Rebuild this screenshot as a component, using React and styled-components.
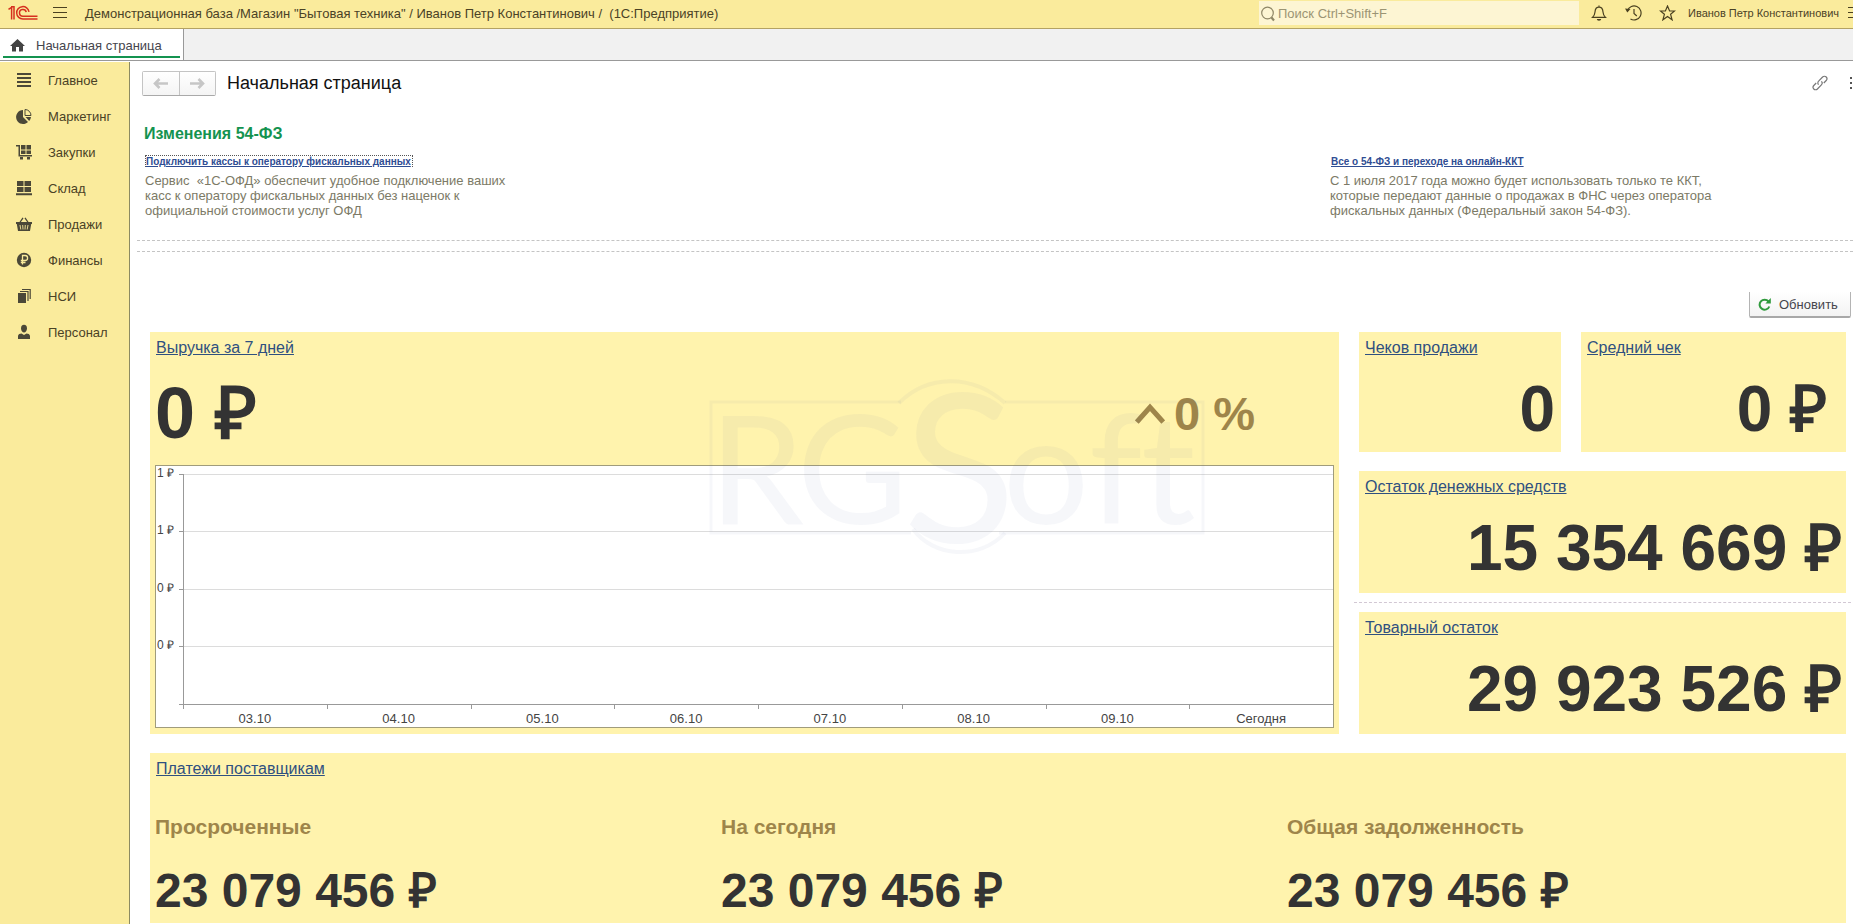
import React from "react";
import styled, { createGlobalStyle, css } from "styled-components";

const GlobalStyle = createGlobalStyle`
  *, *::before, *::after { box-sizing: border-box; }
  body {
    margin: 0;
    background: #fff;
    color: #4a4430;
    font-family: "Liberation Sans", Arial, sans-serif;
    font-size: 13px;
  }
  button, input { font: inherit; color: inherit; }
  h1, h2, h3, p, ul { margin: 0; padding: 0; }
`;

const Page = styled.div`
  display: flex;
  flex-direction: column;
  min-height: 100vh;
  overflow-x: hidden;
`;

/* ---------- top bar ---------- */

const TopBar = styled.header`
  display: flex;
  align-items: center;
  height: 29px;
  padding: 1px 0 3px 8px;
  background: #faeb9c;
  border-bottom: 1px solid #b3a263;
`;

const IconButton = styled.button`
  display: flex;
  align-items: center;
  justify-content: ${(p) => p.$align || "center"};
  flex: none;
  width: ${(p) => p.$width || 34}px;
  height: 24px;
  padding: 0;
  border: 0;
  background: none;
  color: ${(p) => p.$color || "#4a4120"};
  overflow: hidden;
  svg { flex: none; }
`;

const AppTitle = styled.div`
  flex: 1;
  min-width: 0;
  padding-left: 3px;
  white-space: pre;
  overflow: hidden;
  color: #4a4226;
`;

const Search = styled.label`
  display: flex;
  align-items: center;
  width: 320px;
  height: 24px;
  margin-right: 3px;
  padding-left: 2px;
  background: #fdf5d3;
  color: #8f8766;
`;

const SearchInput = styled.input`
  flex: 1;
  min-width: 0;
  padding: 0 0 0 2px;
  border: 0;
  outline: 0;
  background: none;
  &::placeholder { color: #9b9474; opacity: 1; }
`;

const UserName = styled.a`
  width: 164px;
  padding-left: 4px;
  color: #4a4226;
  font-size: 11px;
  text-decoration: none;
  white-space: nowrap;
`;

/* ---------- tabs ---------- */

const TabBar = styled.nav`
  display: flex;
  height: 32px;
  background: #f1f1f1;
  border-bottom: 1px solid #999;
`;

const Tab = styled.a`
  display: flex;
  align-items: flex-start;
  width: 184px;
  padding: 2px 3px;
  background: #fff;
  border-right: 1px solid #999;
  color: #45454d;
  text-decoration: none;
`;

const TabInner = styled.span`
  display: flex;
  align-items: center;
  flex: 1;
  gap: 11px;
  height: 27px;
  padding: 3px 0 0 7px;
  border-bottom: 2px solid #149350;
`;

/* ---------- side menu ---------- */

const Body = styled.div`
  display: flex;
  flex: 1;
`;

const SideMenu = styled.nav`
  flex: none;
  width: 130px;
  margin-top: 1px;
  background: #faeb9c;
  border-right: 1px solid #8c8a62;
`;

const MenuItem = styled.a`
  display: flex;
  align-items: center;
  gap: 16px;
  height: 36px;
  padding-left: 16px;
  color: #4a4226;
  text-decoration: none;
  svg { color: #4b4838; }
`;

/* ---------- content ---------- */

const Content = styled.main`
  flex: 1;
  min-width: 0;
  padding-left: 7px;
`;

const FormHeader = styled.div`
  display: flex;
  align-items: center;
  height: 44px;
  padding-left: 5px;
`;

const NavButtons = styled.div`
  display: flex;
  width: 74px;
  height: 25px;
  margin-right: 11px;
  border: 1px solid #c4c4c4;
  border-bottom-color: #a9a9a9;
  border-radius: 2px;
`;

const NavButton = styled.button`
  display: flex;
  align-items: center;
  justify-content: center;
  flex: 1;
  padding: 0;
  border: 0;
  background: linear-gradient(#fff, #f4f4f4);
  color: #c6c6c6;
  & + & { border-left: 1px solid #c4c4c4; }
`;

const FormTitle = styled.h1`
  flex: 1;
  color: #111;
  font-size: 18px;
  font-weight: 400;
`;

const News = styled.section`
  padding: 20px 0 0 7px;
  height: 135px;
`;

const NewsTitle = styled.h2`
  color: #149350;
  font-size: 16px;
  line-height: 18px;
`;

const NewsColumns = styled.div`
  display: grid;
  grid-template-columns: 1185fr 524fr;
  padding-top: 12px;
`;

const NewsItem = styled.article`
  padding-left: 1px;
`;

const NewsLink = styled.a`
  display: block;
  width: max-content;
  padding-right: 1px;
  border: 1px dotted ${(p) => (p.$focused ? "#555" : "transparent")};
  border-bottom: 0;
  color: #2f4d93;
  font-size: 10px;
  font-weight: 700;
  line-height: 11px;
`;

const NewsText = styled.p`
  padding-top: 6px;
  color: #7c7a66;
  line-height: 15px;
  white-space: pre-line;
`;

const Separator = styled.hr`
  height: 0;
  margin: 0 0 ${(p) => p.$after || 0}px;
  border: 0;
  border-top: 1px dashed #c4c4c4;
`;

const Toolbar = styled.div`
  display: flex;
  justify-content: flex-end;
  padding: 0 2px 14px 0;
`;

const RefreshButton = styled.button`
  display: flex;
  align-items: center;
  gap: 8px;
  width: 102px;
  height: 26px;
  padding: 0 0 0 8px;
  border: 1px solid #b4b4b4;
  border-top: 0;
  border-bottom: 2px solid #a8a8a8;
  border-radius: 0 0 2px 2px;
  background: linear-gradient(#fff, #f3f3f3);
  color: #45454d;
`;

/* ---------- dashboard ---------- */

const Dashboard = styled.div`
  display: grid;
  grid-template-columns: 1189fr 487fr;
  gap: 19px 20px;
  padding: 0 7px 1px 13px;
`;

const Card = styled.section`
  display: flex;
  flex-direction: column;
  position: relative;
  background: #fff3ad;
  ${(p) => p.$wide && css`grid-column: 1 / -1;`}
`;

const CardLink = styled.a`
  align-self: flex-start;
  padding: 7px 0 0 6px;
  color: #2f5080;
  font-size: 16px;
  line-height: 18px;
`;

const Amount = styled.div`
  color: #333;
  font-size: ${(p) => p.$size}px;
  font-weight: 700;
  line-height: ${(p) => p.$size}px;
  white-space: nowrap;
`;

const TileAmount = styled(Amount)`
  padding: 20px ${(p) => p.$right}px 0 0;
  text-align: right;
`;

const RevenueRow = styled.div`
  display: flex;
  justify-content: space-between;
  height: 108px;
  padding: 20px 84px 0 5px;
`;

const Trend = styled.div`
  display: flex;
  align-items: center;
  gap: 9px;
  height: 72px;
  color: #9e854a;
  font-size: 47px;
  font-weight: 700;
`;

const Tiles = styled.div`
  display: grid;
  grid-template-columns: 202fr 265fr;
  grid-template-rows: 120px 122px 122px;
  gap: 19px 20px;
`;

const WideTile = styled(Card)`
  grid-column: 1 / -1;
`;

const TileDivider = styled.hr`
  position: absolute;
  top: -10px;
  left: -5px;
  right: -5px;
  margin: 0;
  border: 0;
  border-top: 1px dashed #d2c8d4;
`;

const ChartBox = styled.div`
  display: grid;
  grid-template-columns: 27px 1fr;
  grid-template-rows: 8px 231px 22px;
  height: 263px;
  margin: 0 5px 6px;
  border: 1px solid #a09c7c;
  background: #fff;
  color: #444;
`;

const YAxis = styled.div`
  grid-area: 2 / 1;
  display: grid;
  grid-template-rows: 57px 58px 57px 58px 1px;
`;

const YLabel = styled.div`
  position: relative;
  height: 14px;
  margin-top: -8px;
  padding-left: 1px;
  font-size: 12px;
  line-height: 14px;
  &::after {
    content: "";
    position: absolute;
    right: 0;
    top: 8px;
    width: 4px;
    border-top: 1px solid #999;
  }
`;

const Plot = styled.div`
  grid-area: 2 / 2;
  display: grid;
  grid-template-rows: 57px 58px 57px 58px 1px;
  border-left: 1px solid #999;
`;

const GridLine = styled.div`
  border-top: 1px solid ${(p) => (p.$axis ? "#999" : "#dcdcdc")};
`;

const XAxis = styled.div`
  grid-area: 3 / 2;
  display: grid;
  grid-template-columns: repeat(8, 1fr);
`;

const XLabel = styled.div`
  padding-top: 6px;
  line-height: 15px;
  text-align: center;
  background: linear-gradient(#999, #999) 0 0 / 1px 4px no-repeat;
`;

const Watermark = styled.svg`
  position: absolute;
  left: 47%;
  top: 47px;
  overflow: visible;
  pointer-events: none;
`;

const Debts = styled.div`
  display: grid;
  grid-template-columns: repeat(3, 1fr);
  margin-right: -2px;
  padding: 37px 0 8px;
`;

const Debt = styled.div`
  padding-left: 5px;
`;

const DebtTitle = styled.h3`
  margin-bottom: 28px;
  color: #9e854a;
  font-size: 21px;
  line-height: 24px;
`;

/* ---------- icons ---------- */

const Logo = () => (
  <svg width="30" height="16" viewBox="0 0 30 16" fill="none" stroke="#d6301f" aria-label="1C">
    <path d="M0.500 4.300 3.600 2.300V14.500M3 1.800H6V14.500" strokeWidth="1.500" />
    <path d="M21 6.800A6.200 6.200 0 1 0 15 14H29.500" strokeWidth="1.500" />
    <path d="M18.200 7.200A3.400 3.400 0 1 0 15 11.300H29.500" strokeWidth="1.500" />
  </svg>
);

const Burger = () => (
  <svg width="14" height="12" viewBox="0 0 14 12" stroke="currentColor">
    <path d="M0 .5h14M0 5.500h14M0 10.500h14" />
  </svg>
);

const Magnifier = () => (
  <svg width="15" height="17" viewBox="0 0 15 17" fill="none" stroke="currentColor">
    <circle cx="6.500" cy="8" r="5.800" strokeWidth="1.200" />
    <path d="M10.500 12.500l2.500 3" strokeWidth="2.200" />
  </svg>
);

const Bell = () => (
  <svg width="16" height="16" viewBox="0 0 16 16" fill="none" stroke="currentColor" strokeWidth="1.200">
    <path d="M8 .5v1.600M1.500 12.400h13c-1.800-1.600-2.300-2.600-2.500-5.400C11.800 3.800 10.200 2.200 8 2.200S4.200 3.800 4 7c-.2 2.800-.7 3.800-2.500 5.400z" />
    <path d="M5.800 14h4.400a2.200 1.800 0 0 1-4.400 0z" fill="currentColor" stroke="none" />
  </svg>
);

const History = () => (
  <svg width="17" height="16" viewBox="0 0 17 16" fill="none" stroke="currentColor" strokeWidth="1.200">
    <path d="M2.500 5.500A7 7 0 1 1 5.500 14M9 4v4.500l2.800 2.500" />
    <path d="M0 3.500l5.500.5L2.300 7.500z" fill="currentColor" stroke="none" />
  </svg>
);

const Star = () => (
  <svg width="17" height="16" viewBox="0 0 17 16" fill="none" stroke="currentColor" strokeWidth="1.200">
    <path d="M8.500 1l2.100 5h5l-4 3.300 1.500 5.500-4.600-3.300-4.600 3.300 1.500-5.500-4-3.300h5z" />
  </svg>
);

const Home = () => (
  <svg width="15" height="13" viewBox="0 0 15 13" fill="#444">
    <path d="M7.500 0 15 7h-2v5.500H9V8H6v4.500H2V7H0z" />
  </svg>
);

const ArrowLeft = () => (
  <svg width="15" height="11" viewBox="0 0 15 11" fill="none" stroke="currentColor" strokeWidth="2.600">
    <path d="M15 5.500H2M6.500 1 2 5.500 6.500 10" />
  </svg>
);

const ArrowRight = () => (
  <svg width="15" height="11" viewBox="0 0 15 11" fill="none" stroke="currentColor" strokeWidth="2.600">
    <path d="M0 5.500h13M8.500 1 13 5.500 8.500 10" />
  </svg>
);

const Chain = () => (
  <svg width="16" height="16" viewBox="0 0 16 16" fill="none" stroke="currentColor" strokeWidth="1.200">
    <path d="M6.600 9.600c-1-1-1-2.400 0-3.400l4-4.200c1-1 2.700-1 3.600 0s1 2.500 0 3.500L11.800 8" />
    <path d="M9.400 6.400c1 1 1 2.400 0 3.400l-4 4.200c-1 1-2.700 1-3.600 0s-1-2.500 0-3.500L4.200 8" />
  </svg>
);

const Dots = () => (
  <svg width="3" height="12" viewBox="0 0 3 12" fill="currentColor">
    <path d="M0 0h2v2H0zM0 5h2v2H0zM0 10h2v2H0z" />
  </svg>
);

const Refresh = () => (
  <svg width="13" height="13" viewBox="0 0 13 13" fill="none" stroke="#2f9a3c" strokeWidth="2">
    <path d="M10.500 3.500A5 5 0 1 0 11.300 8.500" />
    <path d="M12.800 0v5.400H7.400z" fill="#2f9a3c" stroke="none" />
  </svg>
);

const Caret = () => (
  <svg width="30" height="21" viewBox="0 0 30 21" fill="none" stroke="currentColor" strokeWidth="5">
    <path d="M1.800 19 15 4.300 28.200 19" />
  </svg>
);

const menuDrawings = {
  main: <path d="M1 1h14v2H1zM1 5h14v2H1zM1 9h14v2H1zM1 13h14v2H1z" />,
  marketing: (
    <>
      <path d="M7 2v7l5 5A7 7 0 1 1 7 2z" />
      <path d="M9 1.500a6 6 0 0 1 6 6H9z" fill="none" stroke="currentColor" />
      <path d="M9.500 9H15a7 7 0 0 1-1.800 4z" />
    </>
  ),
  purchases: (
    <path d="M0 1h4v10h12v1.500H2.500v-10H0zM5 1h4.500v4.500H5zM10.500 1H15v4.500h-4.500zM5 6.500h4.500V10H5zM10.500 6.500H15V10h-4.500zM4 13h3v2.500H4zM11 13h3v2.500h-3z" />
  ),
  stock: <path d="M1 1h6.500v5H1zM8.500 1H15v5H8.500zM1 7h6.500v5H1zM8.500 7H15v5H8.500zM0 13.300h16v2H0z" />,
  sales: (
    <>
      <path d="M0 6h16v2h-.8L14 15H2L.8 8H0z" />
      <path d="M3.500 7 7 1.800M12.500 7 9 1.800" stroke="currentColor" strokeWidth="1.300" />
      <path d="M4 9l.8 4.500M6.700 9l.3 4.500M9.300 9l-.3 4.500M12 9l-.8 4.500" stroke="#faeb9c" strokeWidth=".9" />
    </>
  ),
  finance: (
    <>
      <circle cx="8" cy="8" r="7.200" />
      <path d="M6.500 12.500v-9h2.600a2.200 2.200 0 0 1 0 5H4.800M4.800 10.500h4.700" fill="none" stroke="#faeb9c" strokeWidth="1.300" />
    </>
  ),
  reference: (
    <>
      <path d="M2 5h8v10H2z" />
      <path d="M4 3.500h8V13M6 1.500h8.200V11" fill="none" stroke="currentColor" strokeWidth="1.200" />
    </>
  ),
  staff: (
    <>
      <path d="M2 15v-3c0-1.700 2-2.500 3.500-2.500L8 11l2.500-1.500C12 9.500 14 10.300 14 12v3z" />
      <path d="M5 4.300a3 3.600 0 0 1 6 0c0 2.400-1.400 4.200-3 4.200S5 6.700 5 4.300z" />
    </>
  ),
};

const MenuIcon = ({ name }) => (
  <svg width="16" height="16" viewBox="0 0 16 16" fill="currentColor">
    {menuDrawings[name]}
  </svg>
);

const RgSoftMark = () => (
  <Watermark width="496" height="176" viewBox="0 0 496 176" fill="none" aria-hidden="true">
    <g stroke="#6070b0" strokeOpacity="0.06" strokeWidth="3">
      <path d="M192 23H2v131h200M296 23h198v131H290" />
      <path d="M190 24C218-4 262-6 296 24M204 150c20 28 66 32 92 4" strokeWidth="4" />
    </g>
    <g fill="#6070b0" fillOpacity="0.06" fontFamily="Lato, sans-serif">
      <text x="0" y="145" fontSize="152">R</text>
      <text x="88" y="145" fontSize="152">G</text>
      <text x="194" y="163" fontSize="208">S</text>
      <text x="294 380 432" y="145" fontSize="152">oft</text>
    </g>
  </Watermark>
);

/* ---------- data ---------- */

const menu = [
  ["main", "Главное"],
  ["marketing", "Маркетинг"],
  ["purchases", "Закупки"],
  ["stock", "Склад"],
  ["sales", "Продажи"],
  ["finance", "Финансы"],
  ["reference", "НСИ"],
  ["staff", "Персонал"],
];

const days = ["03.10", "04.10", "05.10", "06.10", "07.10", "08.10", "09.10", "Сегодня"];
const levels = ["1 ₽", "1 ₽", "0 ₽", "0 ₽"];

const debts = [
  ["Просроченные", "23 079 456 ₽"],
  ["На сегодня", "23 079 456 ₽"],
  ["Общая задолженность", "23 079 456 ₽"],
];

export default function App() {
  return (
    <Page>
      <GlobalStyle />
      <TopBar>
        <Logo />
        <IconButton $width={44} aria-label="Меню"><Burger /></IconButton>
        <AppTitle>
          {'Демонстрационная база /Магазин "Бытовая техника" / Иванов Петр Константинович /  (1С:Предприятие)'}
        </AppTitle>
        <Search>
          <Magnifier />
          <SearchInput aria-label="Поиск" placeholder="Поиск Ctrl+Shift+F" />
        </Search>
        <IconButton aria-label="Уведомления"><Bell /></IconButton>
        <IconButton aria-label="История"><History /></IconButton>
        <IconButton aria-label="Избранное"><Star /></IconButton>
        <UserName href="#user">Иванов Петр Константинович</UserName>
        <IconButton $width={5} $align="flex-start" aria-label="Настройки"><Burger /></IconButton>
      </TopBar>

      <TabBar>
        <Tab href="#home">
          <TabInner><Home />Начальная страница</TabInner>
        </Tab>
      </TabBar>

      <Body>
        <SideMenu>
          {menu.map(([name, label]) => (
            <MenuItem key={name} href={`#${name}`}><MenuIcon name={name} />{label}</MenuItem>
          ))}
        </SideMenu>

        <Content>
          <FormHeader>
            <NavButtons>
              <NavButton aria-label="Назад"><ArrowLeft /></NavButton>
              <NavButton aria-label="Вперед"><ArrowRight /></NavButton>
            </NavButtons>
            <FormTitle>Начальная страница</FormTitle>
            <IconButton $width={38} $color="#777" aria-label="Ссылка"><Chain /></IconButton>
            <IconButton $width={14} $align="flex-end" $color="#555" aria-label="Еще"><Dots /></IconButton>
          </FormHeader>

          <News>
            <NewsTitle>Изменения 54-ФЗ</NewsTitle>
            <NewsColumns>
              <NewsItem>
                <NewsLink $focused href="#ofd">Подключить кассы к оператору фискальных данных</NewsLink>
                <NewsText>
                  {"Сервис \u00a0«1С-ОФД» обеспечит удобное подключение ваших\nкасс к оператору фискальных данных без наценок к\nофициальной стоимости услуг ОФД"}
                </NewsText>
              </NewsItem>
              <NewsItem>
                <NewsLink href="#kkt">Все о 54-ФЗ и переходе на онлайн-ККТ</NewsLink>
                <NewsText>
                  {"С 1 июля 2017 года можно будет использовать только те ККТ,\nкоторые передают данные о продажах в ФНС через оператора\nфискальных данных (Федеральный закон 54-ФЗ)."}
                </NewsText>
              </NewsItem>
            </NewsColumns>
          </News>

          <Separator $after={10} />
          <Separator $after={40} />

          <Toolbar>
            <RefreshButton><Refresh />Обновить</RefreshButton>
          </Toolbar>

          <Dashboard>
            <Card>
              <CardLink href="#revenue">Выручка за 7 дней</CardLink>
              <RevenueRow>
                <Amount $size={72}>0 ₽</Amount>
                <Trend><Caret />0 %</Trend>
              </RevenueRow>
              <ChartBox>
                <YAxis>
                  {levels.map((label, i) => <YLabel key={i}>{label}</YLabel>)}
                  <YLabel />
                </YAxis>
                <Plot>
                  {levels.map((_, i) => <GridLine key={i} />)}
                  <GridLine $axis />
                </Plot>
                <XAxis>
                  {days.map((day) => <XLabel key={day}>{day}</XLabel>)}
                </XAxis>
              </ChartBox>
              <RgSoftMark />
            </Card>

            <Tiles>
              <Card>
                <CardLink href="#receipts">Чеков продажи</CardLink>
                <TileAmount $size={64} $right={6}>0</TileAmount>
              </Card>
              <Card>
                <CardLink href="#average">Средний чек</CardLink>
                <TileAmount $size={64} $right={19}>0 ₽</TileAmount>
              </Card>
              <WideTile>
                <CardLink href="#cash">Остаток денежных средств</CardLink>
                <TileAmount $size={64} $right={4}>15 354 669 ₽</TileAmount>
              </WideTile>
              <WideTile>
                <TileDivider />
                <CardLink href="#goods">Товарный остаток</CardLink>
                <TileAmount $size={64} $right={4}>29 923 526 ₽</TileAmount>
              </WideTile>
            </Tiles>

            <Card $wide>
              <CardLink href="#payments">Платежи поставщикам</CardLink>
              <Debts>
                {debts.map(([title, amount]) => (
                  <Debt key={title}>
                    <DebtTitle>{title}</DebtTitle>
                    <Amount $size={48}>{amount}</Amount>
                  </Debt>
                ))}
              </Debts>
            </Card>
          </Dashboard>
        </Content>
      </Body>
    </Page>
  );
}
